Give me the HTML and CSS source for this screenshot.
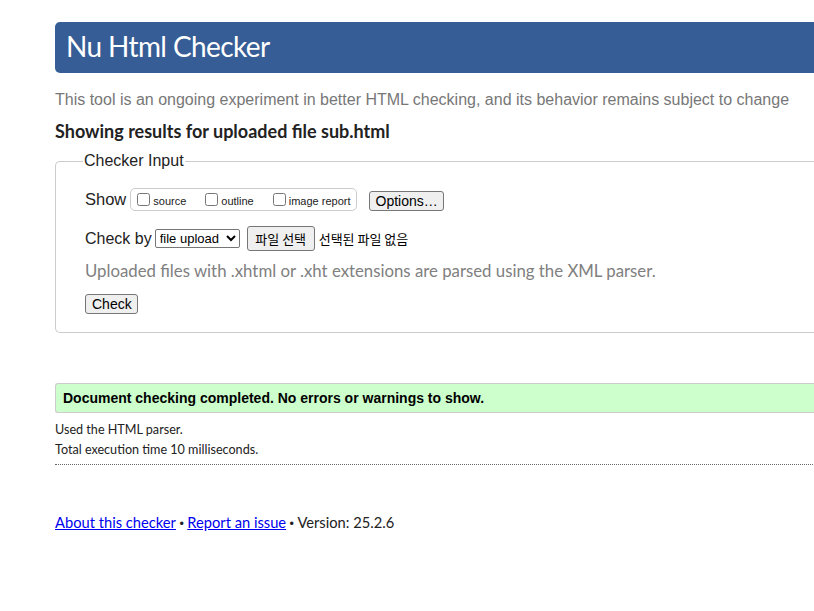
FILE: index.html
```html
<!DOCTYPE html>
<html lang="en">
<head>
<meta charset="utf-8">
<title>Showing results for uploaded file sub.html - Nu Html Checker</title>
<link rel="stylesheet" href="styles.css">
</head>
<body>
<div class="page">
  <h1 class="banner">Nu Html Checker</h1>
  <p class="intro">This tool is an ongoing experiment in better HTML checking, and its behavior remains subject to change</p>
  <p class="results-for">Showing results for uploaded file sub.html</p>
  <form class="checker-form">
    <fieldset class="checker-input">
      <legend class="legend">Checker Input</legend>
      <div class="row show-row">
        <span class="label">Show</span>
        <span class="check-group">
          <label class="opt"><input type="checkbox">source</label>
          <label class="opt"><input type="checkbox">outline</label>
          <label class="opt"><input type="checkbox">image report</label>
        </span>
        <button type="button" class="btn options-btn">Options…</button>
      </div>
      <div class="row checkby-row">
        <span class="label">Check by</span>
        <select class="select"><option>file upload</option></select>
        <span class="file-wrap"><button type="button" class="btn file-btn">파일 선택</button><span class="file-none">선택된 파일 없음</span></span>
      </div>
      <p class="note">Uploaded files with .xhtml or .xht extensions are parsed using the XML parser.</p>
      <div class="row submit-row">
        <button type="button" class="btn check-btn">Check</button>
      </div>
    </fieldset>
  </form>
  <p class="success">Document checking completed. No errors or warnings to show.</p>
  <p class="details">Used the HTML parser.</p>
  <p class="details">Total execution time 10 milliseconds.</p>
  <hr class="divider">
  <p class="footer"><a href="#">About this checker</a><span class="sep"> • </span><a href="#">Report an issue</a><span class="sep"> • </span>Version: 25.2.6</p>
</div>
</body>
</html>
```
FILE: styles.css
```css
html, body {
  margin: 0;
  padding: 0;
  overflow: hidden;
  background: #fff;
}
body {
  font-family: "Lato", "Liberation Sans", sans-serif;
  color: #222;
}
.page {
  width: 1000px;
  padding-left: 55px;
  padding-top: 22px;
}
.banner {
  margin: 0;
  height: 51px;
  background: #365d95;
  color: #fff;
  border-radius: 5px 0 0 5px;
  font-family: "Lato", sans-serif;
  font-weight: 400;
  font-size: 28px;
  letter-spacing: -0.6px;
  line-height: 48px;
  padding-left: 11px;
}
.intro {
  margin: 17px 0 0;
  font-family: "Liberation Sans", Arial, sans-serif;
  font-size: 16px;
  line-height: 20px;
  color: #777;
}
.results-for {
  margin: 10px 0 0;
  font-family: "Lato", sans-serif;
  font-weight: 700;
  font-size: 18px;
  line-height: 22px;
  color: #222;
}
.checker-form {
  margin: 10px 0 0;
}
.checker-input {
  margin: 0;
  border: 1px solid #ccc;
  border-right: none;
  border-radius: 5px 0 0 5px;
  padding: 18px 0 18px 29px;
  min-width: 0;
}
.checker-input .legend {
  font-family: "Liberation Sans", Arial, sans-serif;
  font-size: 16px;
  color: #222;
  padding: 0 1px;
  margin-left: -2px;
}
.row {
  display: flex;
  align-items: center;
}
.label {
  font-family: "Liberation Sans", Arial, sans-serif;
  font-size: 16px;
  color: #222;
  margin-right: 3px;
}
.show-row .label {
  font-size: 16.5px;
  margin-right: 4px;
}
.check-group {
  display: inline-flex;
  align-items: center;
  border: 1px solid #ccc;
  border-radius: 5px;
  height: 21px;
  padding: 0 5px 0 6px;
  gap: 19px;
}
.opt {
  display: inline-flex;
  align-items: center;
  font-family: "Liberation Sans", Arial, sans-serif;
  font-size: 11px;
  color: #222;
  padding-top: 2px;
}
.opt input {
  margin: -3px 3px 0 0;
  width: 13px;
  height: 13px;
}
.btn {
  font-family: "Liberation Sans", Arial, sans-serif;
  font-size: 13px;
  color: #000;
  background: #efefef;
  border: 1px solid #767676;
  border-radius: 3px;
  padding: 1px 6px;
  line-height: 15px;
}
.options-btn {
  margin-left: 12px;
  margin-top: 3px;
  font-size: 14px;
  height: 20px;
  width: 75px;
  padding: 0 6px;
}
.checkby-row {
  margin-top: 15px;
}
.select {
  font-family: "Liberation Sans", Arial, sans-serif;
  font-size: 13px;
  height: 19px;
  width: 85px;
  border: 1px solid #767676;
  border-radius: 2px;
  background: #fff;
  color: #000;
  margin: 0 7px 0 0;
}
.file-wrap {
  display: inline-flex;
  align-items: center;
}
.file-btn {
  font-family: "Noto Sans CJK KR", sans-serif;
  font-size: 13px;
  height: 25px;
  width: 68px;
  padding: 0 6px;
}
.file-none {
  font-family: "Noto Sans CJK KR", sans-serif;
  font-size: 13px;
  color: #000;
  margin-left: 4px;
}
.note {
  margin: 8px 0 0;
  font-family: "Lato", sans-serif;
  font-size: 16.8px;
  line-height: 24px;
  color: #808080;
}
.submit-row {
  margin-top: 11px;
}
.check-btn {
  font-size: 14px;
  height: 20px;
  width: 53px;
  padding: 0 6px;
}
.success {
  margin: 50px 0 0;
  background: #ccffcc;
  border: 1px solid #ccc;
  border-right: none;
  border-radius: 3px 0 0 3px;
  height: 28px;
  line-height: 28px;
  padding-left: 7px;
  font-family: "Liberation Sans", Arial, sans-serif;
  font-weight: 700;
  font-size: 14px;
  color: #000;
}
.details {
  margin: 9px 0 0;
  font-family: "Lato", sans-serif;
  font-size: 12.6px;
  line-height: 16px;
  color: #222;
}
.details + .details { margin-top: 4px; }
.divider {
  margin: 6px 0 0;
  border: none;
  border-top: 1px dotted #666;
  height: 0;
}
.footer {
  margin: 48px 0 0;
  font-family: "Lato", sans-serif;
  font-size: 14.7px;
  color: #222;
}
.footer a {
  color: #0000ee;
}
.footer .sep {
  font-family: "Liberation Sans", Arial, sans-serif;
  font-size: 12.5px;
}
```
